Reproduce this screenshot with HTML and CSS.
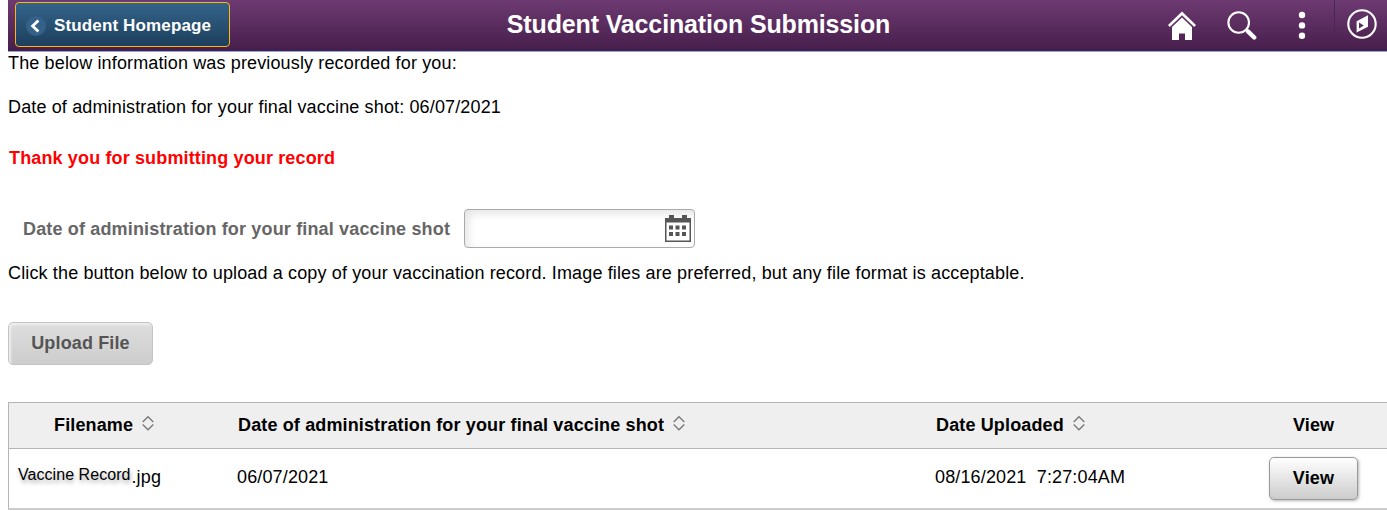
FILE: index.html
```html
<!DOCTYPE html>
<html lang="en">
<head>
    <meta charset="UTF-8">
    <meta name="viewport" content="width=device-width, initial-scale=1.0">
    <title>Student Vaccination Submission</title>
    <link rel="stylesheet" href="styles.css">
</head>
<body>
    <header class="header">
        <div class="header-left">
            <button type="button" class="back-btn">
                <svg class="back-icon" width="20" height="20" viewBox="0 0 20 20">
                    <circle cx="10" cy="10" r="10" fill="#35608a"/>
                    <path d="M12.4 4.4L6.6 10l5.8 5.6" fill="none" stroke="#fff" stroke-width="2.8"/>
                </svg>
                <span>Student Homepage</span>
            </button>
        </div>
        <h1>Student Vaccination Submission</h1>
        <div class="header-icons">
            <svg class="icon-home" width="28" height="30" viewBox="0 0 28 30" fill="#fff">
                <path d="M14 0.4L0 14l1.8 1.9L14 4.2l12.2 11.7L28 14z"/>
                <path d="M14 6.4L4 16v13h7v-6.5h6V29h7V16z"/>
            </svg>
            <svg class="icon-search" width="30" height="30" viewBox="0 0 30 30" fill="none" stroke="#fff">
                <circle cx="11.7" cy="11.5" r="10.3" stroke-width="2.1"/>
                <path d="M19 18.5l2.4 2.3" stroke-width="2.4"/>
                <path d="M21.2 20.7l6 5.8" stroke-width="4.4" stroke-linecap="round"/>
            </svg>
            <svg class="icon-menu" width="8" height="28" viewBox="0 0 8 28" fill="#fff">
                <circle cx="4" cy="4" r="3.2"/>
                <circle cx="4" cy="14.4" r="3.2"/>
                <circle cx="4" cy="24.8" r="3.2"/>
            </svg>
            <svg class="icon-nav" width="30" height="30" viewBox="0 0 30 30">
                <circle cx="15" cy="15" r="13.7" fill="none" stroke="#fff" stroke-width="2.1"/>
                <path d="M21 6.2v11.6l-11.4 5.6V12.2z" fill="#fff"/>
                <path d="M12 13.4l4.8 3-4.8 3.2z" fill="#573061"/>
            </svg>
        </div>
    </header>
    <main class="content">
        <p class="recorded">The below information was previously recorded for you:</p>
        <p class="recorded-date">Date of administration for your final vaccine shot: 06/07/2021</p>
        <p class="thanks">Thank you for submitting your record</p>
        <div class="form-group">
            <label for="shotDate">Date of administration for your final vaccine shot</label>
            <div class="date-field">
                <input type="text" id="shotDate" name="shotDate">
                <svg class="icon-calendar" width="26" height="27" viewBox="0 0 26 27" fill="#555">
                    <path d="M0 3h4V0h5v3h8V0h5v3h4v24H0zM1.5 7.5v18h23v-18z" fill-rule="evenodd"/>
                    <path d="M4 10.5h4v4H4zM10.5 10.5h4v4h-4zM17 10.5h4v4h-4zM4 17h4v4H4zM10.5 17h4v4h-4zM17 17h4v4h-4z"/>
                </svg>
            </div>
        </div>
        <p class="instructions">Click the button below to upload a copy of your vaccination record. Image files are preferred, but any file format is acceptable.</p>
        <button type="button" class="btn btn-upload" disabled>Upload File</button>
        <div class="grid">
            <div class="grid-row grid-head">
                <div class="col-name">Filename
                    <svg class="sort" width="12" height="16" viewBox="0 0 12 16"><path d="M.7 7L6 1.7 11.3 7M.7 9.5L6 14.8l5.3-5.3"/></svg>
                </div>
                <div class="col-date">Date of administration for your final vaccine shot
                    <svg class="sort" width="12" height="16" viewBox="0 0 12 16"><path d="M.7 7L6 1.7 11.3 7M.7 9.5L6 14.8l5.3-5.3"/></svg>
                </div>
                <div class="col-uploaded">Date Uploaded
                    <svg class="sort" width="12" height="16" viewBox="0 0 12 16"><path d="M.7 7L6 1.7 11.3 7M.7 9.5L6 14.8l5.3-5.3"/></svg>
                </div>
                <div class="col-view">View</div>
            </div>
            <div class="grid-row grid-body">
                <div class="col-name"><span class="file-name">Vaccine Record</span><span class="file-ext">.jpg</span></div>
                <div class="col-date">06/07/2021</div>
                <div class="col-uploaded">08/16/2021&nbsp; 7:27:04AM</div>
                <div class="col-view"><button type="button" class="btn btn-view">View</button></div>
            </div>
        </div>
    </main>
</body>
</html>
```
FILE: styles.css
```css
* { box-sizing: border-box; }
body { margin: 0 0 0 8px; background: #fff; color: #000; font-family: Arial, "Liberation Sans", sans-serif; font-size: 18px; line-height: 22px; letter-spacing: 0.14px; overflow: hidden; }
button { font-family: inherit; letter-spacing: inherit; }
p { margin: 0; }

.header { display: grid; grid-template-columns: 1fr auto 1fr; height: 52px; background: linear-gradient(#6d3a72, #461e4b); border-bottom: 1px solid #8ba6d6; color: #fff; }
.header-left { padding: 2px 0 0 7px; }
.back-btn { display: flex; align-items: center; gap: 8px; width: 215px; height: 45px; padding: 2px 0 0 10px; border: 1px solid #fdb714; border-radius: 4px; background: linear-gradient(#33648a, #1d3f5c); color: #fff; font-size: 17px; font-weight: bold; letter-spacing: 0.14px; white-space: nowrap; }
.header h1 { margin: 9px 0 0; padding-left: 2px; font-size: 25px; line-height: 30px; font-weight: bold; letter-spacing: -0.14px; }
.header-icons { display: flex; justify-content: flex-end; }
.header-icons::after { content: ""; order: 1; width: 1px; height: 40px; background: #4b2650; }
.icon-home { margin: 11px 31px 0 0; }
.icon-search { margin: 11px 41px 0 0; }
.icon-menu { margin: 11px 28px 0 0; }
.icon-nav { order: 2; margin: 9px 10px 0 12px; }

.recorded-date { margin-top: 22px; }
.thanks { margin: 29px 0 0 1px; color: #f00; font-weight: bold; }
.form-group { display: flex; align-items: center; gap: 14px; margin-top: 40px; padding-left: 15px; color: #666; font-weight: bold; }
.form-group label { letter-spacing: 0.16px; }
.date-field { display: flex; align-items: center; width: 231px; height: 39px; padding-right: 3px; border: 1px solid #aaa; border-radius: 4px; box-shadow: inset 4px 4px 8px #e6e6e6; }
.date-field input { flex: 1; min-width: 0; height: 100%; border: none; outline: none; background: none; font: inherit; }
.instructions { margin-top: 14px; }

.btn { display: block; padding: 0; border-radius: 5px; font-size: 18px; font-weight: bold; }
.btn-upload { width: 145px; height: 43px; margin-top: 38px; border: 1px solid #c4c4c4; background: linear-gradient(#dedede, #cdcdcd); box-shadow: inset 2px 2px 2px #eee; color: #555; }
.btn-view { width: 89px; height: 43px; border: 1px solid #999; background: linear-gradient(#fff, #ccc); box-shadow: 1px 1px 3px rgba(0,0,0,0.3); color: #000; }

.grid { margin-top: 37px; border: 1px solid #b5b5b5; border-right: none; border-bottom: 2px solid #ccc; }
.grid-row { display: grid; grid-template-columns: 219px 697px 313px 1fr; align-items: center; }
.grid-head { height: 46px; padding-bottom: 2px; border-bottom: 1px solid #b5b5b5; background: #efefef; font-weight: bold; }
.grid-body { height: 59px; }
.grid-head .col-name { padding-left: 45px; }
.grid-body .col-name { display: flex; padding: 0 0 4px 9px; }
.col-date { padding-left: 10px; }
.col-uploaded { padding-left: 11px; }
.grid-body .col-date { padding: 0 0 4px 9px; }
.grid-body .col-uploaded { padding: 0 0 4px 10px; }
.grid-head .col-view { padding-left: 55px; }
.grid-body .col-view { padding-left: 31px; }
.sort { margin-left: 4px; fill: none; stroke: #777; stroke-width: 1.3; }
.file-name { margin-top: -2px; font-size: 16px; letter-spacing: 0.05px; text-shadow: 1px 3px 4px rgba(0,0,0,0.35); }
.file-ext { margin-left: 1px; }
```
